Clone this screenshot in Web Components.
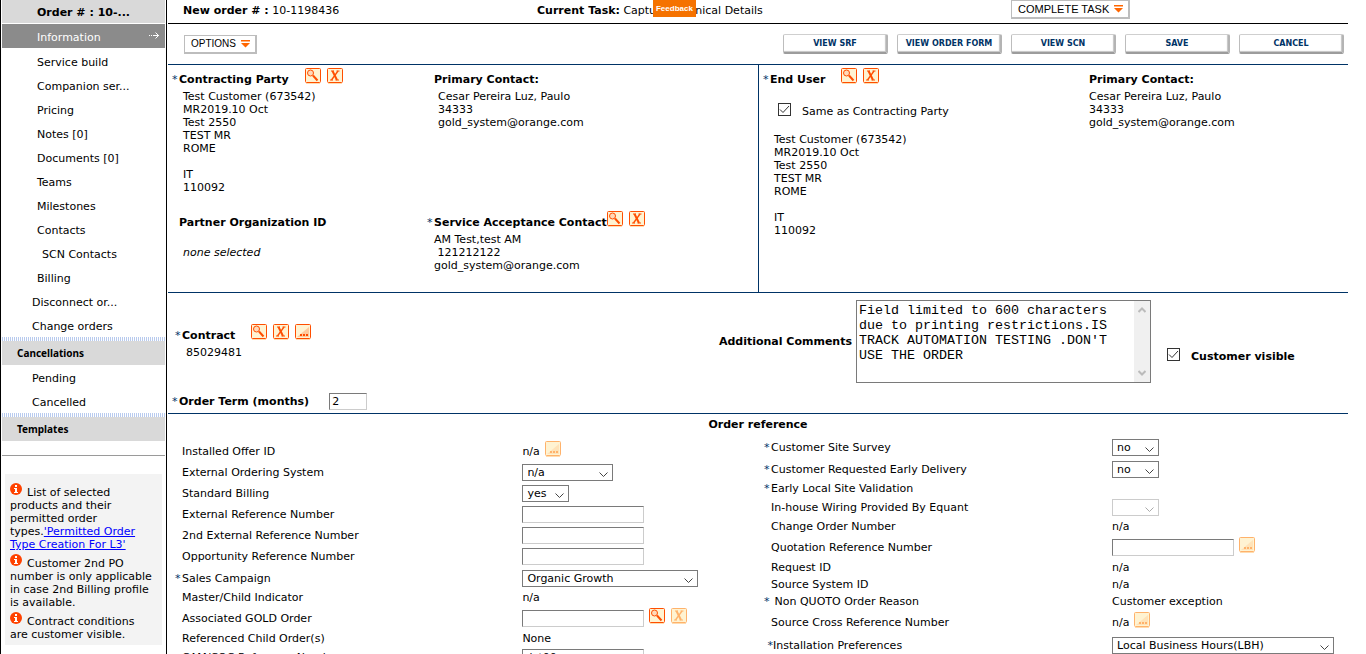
<!DOCTYPE html>
<html lang="en">
<head>
<meta charset="utf-8">
<title>New order</title>
<style>
html, body { height: 100%; }
body {
  margin: 0;
  overflow: hidden;
  background: #fff;
  color: #000;
  font: 11px/13px "DejaVu Sans", Verdana, sans-serif;
}
</style>
</head>
<body>
<order-page></order-page>

<script>
const define = (name, html, setup) => {
  const template = document.createElement('template');
  template.innerHTML = html;
  customElements.define(name, class extends HTMLElement {
    connectedCallback() {
      if (this.shadowRoot) return;
      this.attachShadow({ mode: 'open' }).append(template.content.cloneNode(true));
      if (setup) setup(this, this.shadowRoot);
    }
  });
};

/* Small square icon button: kind = search | clear | more */
const GLYPHS = {
  search: '<circle cx="5.500" cy="5" r="3" fill="#ffd9b8" stroke="currentColor"/><path d="M8 7.500L12.500 12.500" stroke="currentColor" stroke-width="2"/>',
  clear: '<path d="M5.500 3L10 12" stroke="currentColor" stroke-width="2"/><path d="M11 3L4.500 12" stroke="currentColor" stroke-width="1.300"/><path d="M4 3h3M9.500 3H12.500M3 12h3M8.500 12h3.500" stroke="currentColor"/>',
  more: '<path d="M14 3V13H2z" fill="currentColor" opacity=".25"/><path d="M5 10h2v2H5zM8 10h2v2H8zM11 10h2v2h-2z" fill="currentColor"/>'
};
define('icon-button', `
  <style>
    :host { display: block; flex: none; width: 16px; height: 16px; color: #ff4e00; }
    :host([disabled]) { color: #ffb26b; }
    button { display: block; width: 16px; height: 16px; padding: 0; border: 0; background: none; color: inherit; }
    svg { display: block; }
  </style>
  <button type="button"></button>`,
  (host, root) => {
    const kind = host.getAttribute('kind');
    const button = root.querySelector('button');
    button.disabled = host.hasAttribute('disabled');
    button.setAttribute('aria-label', kind);
    button.innerHTML = `<svg width="16" height="16" viewBox="0 0 16 16" fill="none">
      <path d="M1 15.500H15" stroke="#ffdcb0"/>
      <rect x=".5" y=".5" width="15" height="14" rx="1" fill="#fff3d2" stroke="currentColor"/>${GLYPHS[kind]}</svg>`;
  });

define('icon-row', `
  <style>:host { display: flex; flex: none; gap: 6px; }</style><slot></slot>`);

/* Sidebar */
define('nav-item', `
  <style>
    :host { display: block; }
    a { display: flex; align-items: center; justify-content: space-between; box-sizing: border-box;
        height: 24px; padding: 2px 5px 0 30px; color: #000; text-decoration: none; }
    :host([level="1"]) a { padding-left: 35px; }
    :host([level="2"]) a { padding-left: 40px; }
    :host([current]) a { background: #8b8b8b; color: #fff; margin: 1px 0; }
    svg { display: none; margin-bottom: 4px; }
    :host([current]) svg { display: block; }
  </style>
  <a href="#"><slot></slot><svg width="12" height="7" viewBox="0 0 12 7" fill="none" stroke="#fff"><path d="M1 3.500h1M3 3.500h1M5 3.500h6M7.500 0.500l3 3l-3 3"/></svg></a>`);

define('nav-heading', `
  <style>
    :host { display: block; }
    div { height: 4px; background: repeating-linear-gradient(90deg, #b9cbee 0 1px, #fff 1px 2px); }
    h2 { margin: 0; padding-left: 15px; background: #d9d9d9; font: bold 10px/24px "Noto Sans", Tahoma, sans-serif; }
  </style>
  <div></div><h2><slot></slot></h2>`);

define('info-note', `
  <style>
    :host { display: block; }
    p { margin: 0; }
    svg { vertical-align: 1px; margin-right: 5px; }
  </style>
  <p><svg width="12" height="12" viewBox="0 0 12 12"><circle cx="6" cy="6" r="6" fill="#ff4200"/><path d="M5 2h2v2H5zM4 5h3v4h1v1H4V9h1V6H4z" fill="#fff"/></svg><slot></slot></p>`);

define('order-sidebar', `
  <style>
    :host { display: block; flex: none; box-sizing: border-box; width: 167px; padding: 0 1px; border: solid #000; border-width: 0 1px; }
    .order { height: 23px; padding-left: 35px; background: #d9d9d9; font-weight: bold; line-height: 25px; }
    hr { height: 1px; margin: 14px 0 18px; border: 0; background: #9a9a9a; }
    aside { display: grid; gap: 3px; margin: 0 3px; padding: 9px 9px 4px 5px; background: #f3f3f3; }
    a { color: #00f; }
  </style>
  <nav aria-label="Order">
    <div class="order">Order # : 10-...</div>
    <nav-item level="1" current>Information</nav-item>
    <nav-item level="1">Service build</nav-item>
    <nav-item level="1">Companion ser...</nav-item>
    <nav-item level="1">Pricing</nav-item>
    <nav-item level="1">Notes [0]</nav-item>
    <nav-item level="1">Documents [0]</nav-item>
    <nav-item level="1">Teams</nav-item>
    <nav-item level="1">Milestones</nav-item>
    <nav-item level="1">Contacts</nav-item>
    <nav-item level="2">SCN Contacts</nav-item>
    <nav-item level="1">Billing</nav-item>
    <nav-item>Disconnect or...</nav-item>
    <nav-item>Change orders</nav-item>
    <nav-heading>Cancellations</nav-heading>
    <nav-item>Pending</nav-item>
    <nav-item>Cancelled</nav-item>
    <nav-heading>Templates</nav-heading>
  </nav>
  <hr>
  <aside>
    <info-note>List of selected products and their permitted order types.<a href="#">'Permitted Order Type Creation For L3'</a></info-note>
    <info-note>Customer 2nd PO number is only applicable in case 2nd Billing profile is available.</info-note>
    <info-note>Contract conditions are customer visible.</info-note>
  </aside>`);

/* Buttons */
define('menu-button', `
  <style>
    :host { display: block; }
    button { display: flex; align-items: center; justify-content: space-between; gap: 5px; height: 19px; padding: 0 5px 0 6px; border: 1px solid #bdbdbd;
             border-width: 1px 2px 2px 1px; background: #fff; color: #000; font: 11px/13px "Liberation Sans", Arial, sans-serif; }
    :host([compact]) button { font-size: 10px; }
  </style>
  <button type="button"><slot></slot><svg width="9" height="8" viewBox="0 0 9 8" fill="#ff6600"><path d="M0 0h9v1.500H0zM0 3h9L4.500 7.500z"/></svg></button>`);

define('action-button', `
  <style>
    :host { display: block; width: 105px; }
    button { width: 100%; height: 20px; padding: 0; border: 1px solid #c4c4c4; border-width: 1px 2px 2px 1px;
             border-color: #cfcfcf #b4b4b4 #9c9c9c #bdbdbd; border-radius: 2px; background: #fff; box-shadow: inset -1px -1px 1px #c4c4c4;
             color: #003366; font: bold 8px/13px "DejaVu Sans", sans-serif; }
  </style>
  <button type="button"><slot></slot></button>`);

/* Panel heading with optional required marker and icons */
define('panel-heading', `
  <style>
    :host { display: flex; height: 22px; }
    :host([spaced]) { gap: 16px; }
    h3 { display: flex; flex: none; align-self: flex-end; margin: 0 0 4px; font-size: 11px; line-height: 13px; }
    span { width: 7px; font-weight: normal; color: #003366; }
    :host(:not([required])) span { width: auto; }
    :host([required]) span::before { content: "*"; }
    :host([indent]) { padding-left: 7px; }
  </style>
  <h3><span></span><slot></slot></h3><slot name="icons"></slot>`);

define('text-lines', `<style>:host { display: block; white-space: pre; }</style><slot></slot>`);

define('check-field', `
  <style>
    :host { display: block; }
    label { display: flex; gap: 11px; line-height: 18px; }
    :host([strong]) label { font-weight: bold; }
    input { appearance: none; flex: none; width: 13px; height: 13px; margin: 0; border: 1px solid #333; background: #fff
      url("data:image/svg+xml,%3Csvg xmlns='http://www.w3.org/2000/svg' width='11' height='11' fill='none' stroke='%23333'%3E%3Cpath d='M1 5.500L4 8.500L10 2'/%3E%3C/svg%3E") no-repeat; }
  </style>
  <label><input type="checkbox" checked><slot></slot></label>`);

const CONTROL_CSS = `
  input, select { box-sizing: border-box; height: 17px; margin: 0; border-radius: 0; background: #fff; color: #000;
    font: 11px/13px "DejaVu Sans", Verdana, sans-serif; }
  input { width: 122px; padding: 0 2px; border: 1px solid; border-color: #7a7a7a #ccc #ccc #7a7a7a; }
  select { appearance: none; padding: 0 16px 0 4px; border: 1px solid #7a7a7a; }
  select { background: #fff url("data:image/svg+xml,%3Csvg xmlns='http://www.w3.org/2000/svg' width='9' height='6' fill='none' stroke='%23444'%3E%3Cpath d='M.5 .5L4.500 4.500L8.500 .5'/%3E%3C/svg%3E") no-repeat right 4px top 7px; }
  select:disabled { border-color: #ccc; opacity: 1; background-image: url("data:image/svg+xml,%3Csvg xmlns='http://www.w3.org/2000/svg' width='9' height='6' fill='none' stroke='%23aaa'%3E%3Cpath d='M.5 .5L4.500 4.500L8.500 .5'/%3E%3C/svg%3E"); }
  .narrow { width: 47px; } .short { width: 91px; } .medium { width: 176px; } .long { width: 222px; } .tiny { width: 38px; }`;

/* One labelled row: type = select | input, or plain text when absent */
define('order-field', `
  <style>${CONTROL_CSS}
    :host { display: grid; grid-template-columns: 3fr 2fr; align-items: center; height: 17px; }
    :host([type]) { height: 21px; }
    :host([type][required]) { height: 22px; }
    :host([icons]) { height: 24px; }
    :host([leading]) { height: 21px; }
    .name { display: flex; padding-left: 6px; white-space: pre; }
    .mark { min-width: 7px; color: #003366; }
    .value { display: flex; align-items: center; gap: 5px; white-space: nowrap; }
    ::slotted(icon-row) { padding-bottom: 5px; }
  </style>
  <label class="name" for="control"><span class="mark"></span><span class="text"></span></label>
  <div class="value"><slot></slot></div>`,
  (host, root) => {
    const type = host.getAttribute('type');
    const value = host.getAttribute('value') || '';
    root.querySelector('.text').textContent = host.getAttribute('label');
    if (host.hasAttribute('required')) root.querySelector('.mark').textContent = host.getAttribute('mark') || '*';
    let control;
    if (type === 'select') {
      control = document.createElement('select');
      control.className = host.getAttribute('size');
      control.add(new Option(value));
    } else if (type === 'input') {
      control = document.createElement('input');
      control.value = value;
    } else {
      control = document.createElement('output');
      control.textContent = value;
    }
    control.id = 'control';
    if (host.hasAttribute('disabled')) control.disabled = true;
    root.querySelector('.value').prepend(control);
  });

define('term-field', `
  <style>${CONTROL_CSS}
    :host { display: block; }
    label { display: flex; align-items: center; font-weight: bold; }
    span { width: 7px; font-weight: normal; color: #003366; }
    input { margin-left: 20px; }
  </style>
  <label><span>*</span><slot></slot><input class="tiny" value="2"></label>`);

define('comment-field', `
  <style>
    :host { display: flex; align-items: center; gap: 4px; }
    label { font-weight: bold; white-space: nowrap; }
    .box { display: flex; box-sizing: border-box; width: 295px; height: 83px; border: 1px solid #7a7a7a; }
    textarea { flex: 1; min-width: 0; margin: 0; padding: 2px; border: 0; outline: 0; resize: none; overflow: hidden;
      background: #fff; color: #000; font-family: "Liberation Mono", "Courier New", monospace; line-height: 15px; }
    .scroll { display: flex; flex-direction: column; justify-content: space-between; align-items: center; width: 16px; padding: 6px 0; box-sizing: border-box; background: #f0f0f0; }
  </style>
  <label for="comments">Additional Comments</label>
  <div class="box">
    <textarea id="comments">Field limited to 600 characters due to printing restrictions.IS TRACK AUTOMATION TESTING .DON'T USE THE ORDER</textarea>
    <div class="scroll">
      <svg width="8" height="6" viewBox="0 0 8 6" fill="none" stroke="#bbb" stroke-width="2"><path d="M.5 5L4 1.500L7.500 5"/></svg>
      <svg width="8" height="6" viewBox="0 0 8 6" fill="none" stroke="#bbb" stroke-width="2"><path d="M.5 1L4 4.500L7.500 1"/></svg>
    </div>
  </div>`);

/* Top bars */
define('task-header', `
  <style>
    :host { display: grid; grid-template-columns: 354fr 474fr 337fr; height: 23px; padding-left: 15px; border-bottom: 1px solid #000; line-height: 21px; }
    menu-button { width: max-content; }
    .feedback { position: fixed; top: 0; left: 47.8%; width: 43px; height: 17px; padding: 0; border: 0; background: #f57200; color: #fff;
      font: bold 8px/17px "Liberation Sans", Arial, sans-serif; }
  </style>
  <div><b>New order # :</b> 10-1198436</div>
  <div><b>Current Task:</b> Capture Technical Details</div>
  <menu-button>COMPLETE TASK</menu-button>
  <button class="feedback" type="button">Feedback</button>`);

define('order-toolbar', `
  <style>
    :host { display: flex; align-items: center; gap: 9px; height: 40px; padding: 0 4px 0 16px; border-bottom: 1px solid #003366; }
    menu-button { margin-right: auto; }
  </style>
  <menu-button compact>OPTIONS</menu-button>
  <action-button>VIEW SRF</action-button>
  <action-button>VIEW ORDER FORM</action-button>
  <action-button>VIEW SCN</action-button>
  <action-button>SAVE</action-button>
  <action-button>CANCEL</action-button>`);

define('party-section', `
  <style>
    :host { display: grid; grid-template-columns: 1fr 1fr; border-bottom: 1px solid #003366; }
    .party { display: grid; padding: 3px 0 0 4px; align-content: start; }
    .customer { grid-template-columns: 255fr 331fr; row-gap: 17px; padding-bottom: 20px; }
    .user { grid-template-columns: 319fr 266fr; border-left: 1px solid #003366; }
    .lines { padding-left: 11px; }
    .customer .contact { padding-left: 11px; }
    .heading-inset, .user .contact, .user .contact-heading { padding-left: 7px; }
    i { display: block; padding: 13px 0 0 11px; }
    check-field { padding: 13px 0 12px 15px; }
  </style>
  <div class="party customer">
    <div>
      <panel-heading required spaced>Contracting Party<icon-row slot="icons"><icon-button kind="search"></icon-button><icon-button kind="clear"></icon-button></icon-row></panel-heading>
      <text-lines class="lines">Test Customer (673542)
MR2019.10 Oct
Test 2550
TEST MR
ROME

IT
110092</text-lines>
    </div>
    <div>
      <panel-heading indent>Primary Contact:</panel-heading>
      <text-lines class="contact">Cesar Pereira Luz, Paulo
34333
gold_system@orange.com</text-lines>
    </div>
    <div>
      <panel-heading indent>Partner Organization ID</panel-heading>
      <i>none selected</i>
    </div>
    <div>
      <panel-heading required>Service Acceptance Contact<icon-row slot="icons"><icon-button kind="search"></icon-button><icon-button kind="clear"></icon-button></icon-row></panel-heading>
      <text-lines class="heading-inset">AM Test,test AM
 121212122
gold_system@orange.com</text-lines>
    </div>
  </div>
  <div class="party user">
    <div>
      <panel-heading required spaced>End User<icon-row slot="icons"><icon-button kind="search"></icon-button><icon-button kind="clear"></icon-button></icon-row></panel-heading>
      <check-field>Same as Contracting Party</check-field>
      <text-lines class="lines">Test Customer (673542)
MR2019.10 Oct
Test 2550
TEST MR
ROME

IT
110092</text-lines>
    </div>
    <div>
      <panel-heading indent>Primary Contact:</panel-heading>
      <text-lines class="contact">Cesar Pereira Luz, Paulo
34333
gold_system@orange.com</text-lines>
    </div>
  </div>`);

define('contract-section', `
  <style>
    :host { display: grid; grid-template-columns: 1fr auto 181px; column-gap: 16px; padding-bottom: 3px; border-bottom: 1px solid #003366; }
    .contract { padding: 31px 0 0 4px; }
    panel-heading { padding-left: 3px; }
    text-lines { padding-left: 14px; }
    term-field { margin-top: 34px; }
    comment-field { align-self: start; padding-top: 7px; }
    check-field { padding-top: 55px; }
  </style>
  <div class="contract">
    <panel-heading required spaced>Contract<icon-row slot="icons"><icon-button kind="search"></icon-button><icon-button kind="clear"></icon-button><icon-button kind="more"></icon-button></icon-row></panel-heading>
    <text-lines>85029481</text-lines>
    <term-field>Order Term (months)</term-field>
  </div>
  <comment-field></comment-field>
  <check-field strong>Customer visible</check-field>`);

define('reference-section', `
  <style>
    :host { display: block; }
    h2 { margin: 0; font-size: 11px; line-height: 22px; text-align: center; }
    .columns { display: grid; grid-template-columns: 1fr 1fr; }
    .left { padding: 5px 0 0 1px; }
  </style>
  <h2>Order reference</h2>
  <div class="columns">
    <div class="left">
      <order-field label="Installed Offer ID" value="n/a" icons leading><icon-row><icon-button kind="more" disabled></icon-button></icon-row></order-field>
      <order-field label="External Ordering System" type="select" size="short" value="n/a"></order-field>
      <order-field label="Standard Billing" type="select" size="narrow" value="yes"></order-field>
      <order-field label="External Reference Number" type="input"></order-field>
      <order-field label="2nd External Reference Number" type="input"></order-field>
      <order-field label="Opportunity Reference Number" type="input"></order-field>
      <order-field label="Sales Campaign" required type="select" size="medium" value="Organic Growth"></order-field>
      <order-field label="Master/Child Indicator" value="n/a"></order-field>
      <order-field label="Associated GOLD Order" type="input" icons><icon-row><icon-button kind="search"></icon-button><icon-button kind="clear" disabled></icon-button></icon-row></order-field>
      <order-field label="Referenced Child Order(s)" value="None"></order-field>
      <order-field label="CAM/COC Reference Number" type="input" value="dct00"></order-field>
    </div>
    <div class="right">
      <order-field label="Customer Site Survey" required type="select" size="narrow" value="no"></order-field>
      <order-field label="Customer Requested Early Delivery" required type="select" size="narrow" value="no"></order-field>
      <order-field label="Early Local Site Validation" required></order-field>
      <order-field label="In-house Wiring Provided By Equant" type="select" size="narrow" disabled></order-field>
      <order-field label="Change Order Number" value="n/a"></order-field>
      <order-field label="Quotation Reference Number" type="input" icons><icon-row><icon-button kind="more" disabled></icon-button></icon-row></order-field>
      <order-field label="Request ID" value="n/a"></order-field>
      <order-field label="Source System ID" value="n/a"></order-field>
      <order-field label="&nbsp;Non QUOTO Order Reason" required value="Customer exception"></order-field>
      <order-field label="Source Cross Reference Number" value="n/a" icons><icon-row><icon-button kind="more" disabled></icon-button></icon-row></order-field>
      <order-field label="Installation Preferences" required mark="&nbsp;*" type="select" size="long" value="Local Business Hours(LBH)"></order-field>
    </div>
  </div>`);

define('order-page', `
  <style>
    :host { display: flex; height: 100%; overflow: hidden; }
    main { flex: 1; min-width: 0; padding: 0 18px 0 1px; }
  </style>
  <order-sidebar></order-sidebar>
  <main>
    <task-header></task-header>
    <order-toolbar></order-toolbar>
    <party-section></party-section>
    <contract-section></contract-section>
    <reference-section></reference-section>
  </main>`);
</script>
</body>
</html>
